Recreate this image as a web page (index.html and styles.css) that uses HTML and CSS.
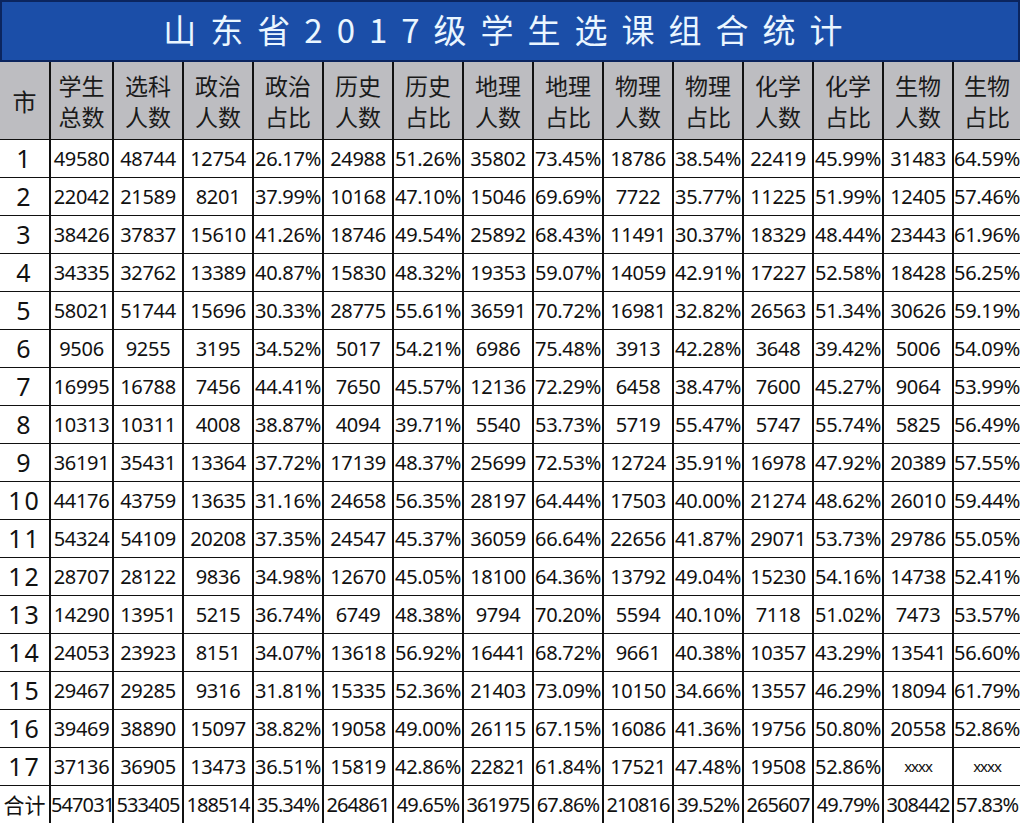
FILE: index.html
```html
<!DOCTYPE html>
<html lang="zh">
<head>
<meta charset="utf-8">
<title>山东省2017级学生选课组合统计</title>
<link rel="stylesheet" href="styles.css">
</head>
<body>
<div class="sheet">
  <div class="title">山东省2017级学生选课组合统计</div>
  <table class="grid">
    <colgroup>
      <col class="c-city"><col class="c-first">
      <col class="c-mid"><col class="c-mid"><col class="c-mid"><col class="c-mid"><col class="c-mid"><col class="c-mid">
      <col class="c-mid"><col class="c-mid"><col class="c-mid"><col class="c-mid"><col class="c-mid"><col class="c-mid">
      <col class="c-last">
    </colgroup>
    <thead>
      <tr class="head">
        <th class="city-h">市</th>
        <th>学生<br>总数</th><th>选科<br>人数</th>
        <th>政治<br>人数</th><th>政治<br>占比</th>
        <th>历史<br>人数</th><th>历史<br>占比</th>
        <th>地理<br>人数</th><th>地理<br>占比</th>
        <th>物理<br>人数</th><th>物理<br>占比</th>
        <th>化学<br>人数</th><th>化学<br>占比</th>
        <th>生物<br>人数</th><th>生物<br>占比</th>
      </tr>
    </thead>
    <tbody>
      <tr><td class="idx">1</td><td>49580</td><td>48744</td><td>12754</td><td>26.17%</td><td>24988</td><td>51.26%</td><td>35802</td><td>73.45%</td><td>18786</td><td>38.54%</td><td>22419</td><td>45.99%</td><td>31483</td><td>64.59%</td></tr>
      <tr><td class="idx">2</td><td>22042</td><td>21589</td><td>8201</td><td>37.99%</td><td>10168</td><td>47.10%</td><td>15046</td><td>69.69%</td><td>7722</td><td>35.77%</td><td>11225</td><td>51.99%</td><td>12405</td><td>57.46%</td></tr>
      <tr><td class="idx">3</td><td>38426</td><td>37837</td><td>15610</td><td>41.26%</td><td>18746</td><td>49.54%</td><td>25892</td><td>68.43%</td><td>11491</td><td>30.37%</td><td>18329</td><td>48.44%</td><td>23443</td><td>61.96%</td></tr>
      <tr><td class="idx">4</td><td>34335</td><td>32762</td><td>13389</td><td>40.87%</td><td>15830</td><td>48.32%</td><td>19353</td><td>59.07%</td><td>14059</td><td>42.91%</td><td>17227</td><td>52.58%</td><td>18428</td><td>56.25%</td></tr>
      <tr><td class="idx">5</td><td>58021</td><td>51744</td><td>15696</td><td>30.33%</td><td>28775</td><td>55.61%</td><td>36591</td><td>70.72%</td><td>16981</td><td>32.82%</td><td>26563</td><td>51.34%</td><td>30626</td><td>59.19%</td></tr>
      <tr><td class="idx">6</td><td>9506</td><td>9255</td><td>3195</td><td>34.52%</td><td>5017</td><td>54.21%</td><td>6986</td><td>75.48%</td><td>3913</td><td>42.28%</td><td>3648</td><td>39.42%</td><td>5006</td><td>54.09%</td></tr>
      <tr><td class="idx">7</td><td>16995</td><td>16788</td><td>7456</td><td>44.41%</td><td>7650</td><td>45.57%</td><td>12136</td><td>72.29%</td><td>6458</td><td>38.47%</td><td>7600</td><td>45.27%</td><td>9064</td><td>53.99%</td></tr>
      <tr><td class="idx">8</td><td>10313</td><td>10311</td><td>4008</td><td>38.87%</td><td>4094</td><td>39.71%</td><td>5540</td><td>53.73%</td><td>5719</td><td>55.47%</td><td>5747</td><td>55.74%</td><td>5825</td><td>56.49%</td></tr>
      <tr><td class="idx">9</td><td>36191</td><td>35431</td><td>13364</td><td>37.72%</td><td>17139</td><td>48.37%</td><td>25699</td><td>72.53%</td><td>12724</td><td>35.91%</td><td>16978</td><td>47.92%</td><td>20389</td><td>57.55%</td></tr>
      <tr><td class="idx">10</td><td>44176</td><td>43759</td><td>13635</td><td>31.16%</td><td>24658</td><td>56.35%</td><td>28197</td><td>64.44%</td><td>17503</td><td>40.00%</td><td>21274</td><td>48.62%</td><td>26010</td><td>59.44%</td></tr>
      <tr><td class="idx">11</td><td>54324</td><td>54109</td><td>20208</td><td>37.35%</td><td>24547</td><td>45.37%</td><td>36059</td><td>66.64%</td><td>22656</td><td>41.87%</td><td>29071</td><td>53.73%</td><td>29786</td><td>55.05%</td></tr>
      <tr><td class="idx">12</td><td>28707</td><td>28122</td><td>9836</td><td>34.98%</td><td>12670</td><td>45.05%</td><td>18100</td><td>64.36%</td><td>13792</td><td>49.04%</td><td>15230</td><td>54.16%</td><td>14738</td><td>52.41%</td></tr>
      <tr><td class="idx">13</td><td>14290</td><td>13951</td><td>5215</td><td>36.74%</td><td>6749</td><td>48.38%</td><td>9794</td><td>70.20%</td><td>5594</td><td>40.10%</td><td>7118</td><td>51.02%</td><td>7473</td><td>53.57%</td></tr>
      <tr><td class="idx">14</td><td>24053</td><td>23923</td><td>8151</td><td>34.07%</td><td>13618</td><td>56.92%</td><td>16441</td><td>68.72%</td><td>9661</td><td>40.38%</td><td>10357</td><td>43.29%</td><td>13541</td><td>56.60%</td></tr>
      <tr><td class="idx">15</td><td>29467</td><td>29285</td><td>9316</td><td>31.81%</td><td>15335</td><td>52.36%</td><td>21403</td><td>73.09%</td><td>10150</td><td>34.66%</td><td>13557</td><td>46.29%</td><td>18094</td><td>61.79%</td></tr>
      <tr><td class="idx">16</td><td>39469</td><td>38890</td><td>15097</td><td>38.82%</td><td>19058</td><td>49.00%</td><td>26115</td><td>67.15%</td><td>16086</td><td>41.36%</td><td>19756</td><td>50.80%</td><td>20558</td><td>52.86%</td></tr>
      <tr><td class="idx">17</td><td>37136</td><td>36905</td><td>13473</td><td>36.51%</td><td>15819</td><td>42.86%</td><td>22821</td><td>61.84%</td><td>17521</td><td>47.48%</td><td>19508</td><td>52.86%</td><td class="small">xxxx</td><td class="small">xxxx</td></tr>
      <tr class="sum"><td class="total">合计</td><td>547031</td><td>533405</td><td>188514</td><td>35.34%</td><td>264861</td><td>49.65%</td><td>361975</td><td>67.86%</td><td>210816</td><td>39.52%</td><td>265607</td><td>49.79%</td><td>308442</td><td>57.83%</td></tr>
    </tbody>
  </table>
</div>
</body>
</html>
```

FILE: styles.css
```css
html, body {
  margin: 0;
  padding: 0;
  background: #ffffff;
}

.sheet {
  width: 1020px;
  height: 824px;
  overflow: hidden;
}

.title {
  box-sizing: border-box;
  height: 62px;
  background: #1b4ea8;
  border: 2px solid #0b255f;
  color: #eaf6ff;
  font-family: "Noto Sans CJK SC", "Noto Sans", sans-serif;
  font-size: 33px;
  line-height: 55px;
  letter-spacing: 14px;
  text-align: center;
  padding-left: 0;
}

.grid {
  width: 1020px;
  table-layout: fixed;
  border-collapse: collapse;
  font-family: "Noto Sans", "Noto Sans CJK SC", sans-serif;
  color: #111111;
}

.c-city { width: 50px; }
.c-first { width: 63px; }
.c-mid { width: 70px; }
.c-last { width: 67px; }

.grid th,
.grid td {
  border: 1px solid #111111;
  border-left-width: 2px;
  padding: 0;
  text-align: center;
  white-space: nowrap;
  overflow: hidden;
}

.grid tr > :first-child { border-left: none; }
.grid tr > :last-child { border-right: none; }

.head th {
  height: 77px;
  background: #bdbdc1;
  border-top: none;
  font-family: "Noto Sans CJK SC", sans-serif;
  font-weight: 400;
  font-size: 23px;
  line-height: 31px;
  color: #1a1a1a;
}

.head .city-h { font-size: 24px; }

.grid td {
  height: 37px;
  font-size: 20px;
  letter-spacing: -0.3px;
  line-height: 37px;
}

.grid td.idx {
  font-size: 25px;
  letter-spacing: 2px;
}

.grid .sum td {
  letter-spacing: -0.9px;
  overflow: visible;
}

.grid td.total {
  font-family: "Noto Sans CJK SC", sans-serif;
  font-size: 21px;
  letter-spacing: 0;
}

.grid td.small {
  font-size: 15px;
  letter-spacing: -1px;
}

.grid tbody tr:last-child td { border-bottom: none; }
```
